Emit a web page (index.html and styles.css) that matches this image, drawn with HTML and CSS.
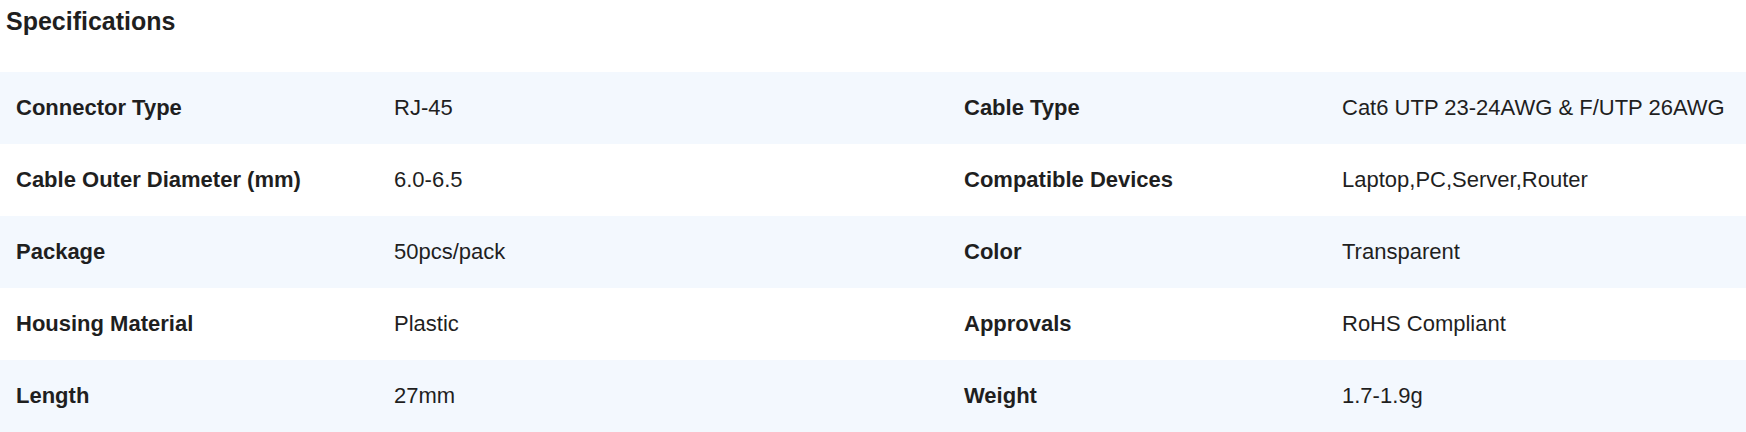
FILE: index.html
```html
<!DOCTYPE html>
<html>
<head>
<meta charset="utf-8">
<link rel="stylesheet" href="styles.css">
</head>
<body>
<section class="specs">
  <h2 class="specs-title">Specifications</h2>
  <div class="specs-table">
    <div class="row">
      <div class="label">Connector Type</div><div class="value">RJ-45</div>
      <div class="label">Cable Type</div><div class="value">Cat6 UTP 23-24AWG &amp; F/UTP 26AWG</div>
    </div>
    <div class="row">
      <div class="label">Cable Outer Diameter (mm)</div><div class="value">6.0-6.5</div>
      <div class="label">Compatible Devices</div><div class="value">Laptop,PC,Server,Router</div>
    </div>
    <div class="row">
      <div class="label">Package</div><div class="value">50pcs/pack</div>
      <div class="label">Color</div><div class="value">Transparent</div>
    </div>
    <div class="row">
      <div class="label">Housing Material</div><div class="value">Plastic</div>
      <div class="label">Approvals</div><div class="value">RoHS Compliant</div>
    </div>
    <div class="row">
      <div class="label">Length</div><div class="value">27mm</div>
      <div class="label">Weight</div><div class="value">1.7-1.9g</div>
    </div>
  </div>
</section>
</body>
</html>
```

FILE: styles.css
```css
html, body {
  margin: 0;
  padding: 0;
  background: #ffffff;
}
body {
  font-family: "Liberation Sans", Arial, sans-serif;
  color: #1f1f1f;
}
.specs {
  width: 1746px;
}
.specs-title {
  margin: 0;
  height: 72px;
  box-sizing: border-box;
  padding: 6px 0 0 6px;
  font-size: 25px;
  line-height: 30px;
  font-weight: 700;
  color: #1f1f1f;
}
.specs-table {
  display: flex;
  flex-direction: column;
}
.row {
  display: grid;
  grid-template-columns: 378px 570px 378px 1fr;
  height: 72px;
  align-items: center;
}
.row:nth-child(odd) {
  background: #f3f8fe;
}
.label, .value {
  padding-left: 16px;
  font-size: 22px;
  line-height: 26px;
  white-space: nowrap;
}
.label {
  font-weight: 700;
}
.value {
  font-weight: 400;
}
```
